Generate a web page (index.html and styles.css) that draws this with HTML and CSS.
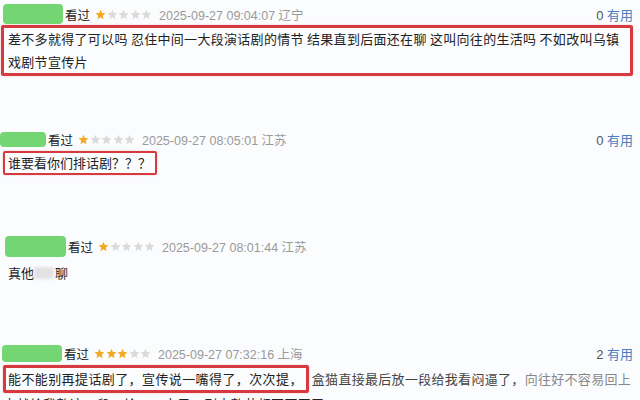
FILE: index.html
```html
<!DOCTYPE html>
<html lang="zh-CN">
<head>
    <meta charset="UTF-8">
    <meta name="viewport" content="width=device-width, initial-scale=1.0">
    <title>短评</title>
    <link rel="stylesheet" href="styles.css">
</head>
<body>
    <svg width="0" height="0" class="defs">
        <defs>
            <polygon id="star" points="12,1.5 15,8.8 22.8,9.4 16.8,14.5 18.7,22.2 12,18 5.3,22.2 7.2,14.5 1.2,9.4 9,8.8"/>
        </defs>
    </svg>

    <div class="list">
        <!-- 评论 1 -->
        <div class="comment c1">
            <div class="meta">
                <span class="user u1"></span>
                <span class="seen">看过</span>
                <span class="stars">
                    <svg viewBox="0 0 24 24" class="on"><use href="#star"/></svg><svg viewBox="0 0 24 24"><use href="#star"/></svg><svg viewBox="0 0 24 24"><use href="#star"/></svg><svg viewBox="0 0 24 24"><use href="#star"/></svg><svg viewBox="0 0 24 24"><use href="#star"/></svg>
                </span>
                <span class="time">2025-09-27 09:04:07 辽宁</span>
                <span class="useful"><span class="num">0</span> <a href="#">有用</a></span>
            </div>
            <p class="text boxed b1">差不多就得了可以吗 忍住中间一大段演话剧的情节 结果直到后面还在聊 这叫向往的生活吗 不如改叫乌镇戏剧节宣传片</p>
        </div>

        <!-- 评论 2 -->
        <div class="comment c2">
            <div class="meta">
                <span class="user u2"></span>
                <span class="seen">看过</span>
                <span class="stars">
                    <svg viewBox="0 0 24 24" class="on"><use href="#star"/></svg><svg viewBox="0 0 24 24"><use href="#star"/></svg><svg viewBox="0 0 24 24"><use href="#star"/></svg><svg viewBox="0 0 24 24"><use href="#star"/></svg><svg viewBox="0 0 24 24"><use href="#star"/></svg>
                </span>
                <span class="time">2025-09-27 08:05:01 江苏</span>
                <span class="useful"><span class="num">0</span> <a href="#">有用</a></span>
            </div>
            <p class="text"><span class="boxed b2">谁要看你们排话剧？？？</span></p>
        </div>

        <!-- 评论 3 -->
        <div class="comment c3">
            <div class="meta">
                <span class="user u3"></span>
                <span class="seen">看过</span>
                <span class="stars">
                    <svg viewBox="0 0 24 24" class="on"><use href="#star"/></svg><svg viewBox="0 0 24 24"><use href="#star"/></svg><svg viewBox="0 0 24 24"><use href="#star"/></svg><svg viewBox="0 0 24 24"><use href="#star"/></svg><svg viewBox="0 0 24 24"><use href="#star"/></svg>
                </span>
                <span class="time">2025-09-27 08:01:44 江苏</span>
            </div>
            <p class="text plain">真他<span class="blur"></span>聊</p>
        </div>

        <!-- 评论 4 -->
        <div class="comment c4">
            <div class="meta">
                <span class="user u4"></span>
                <span class="seen">看过</span>
                <span class="stars">
                    <svg viewBox="0 0 24 24" class="on"><use href="#star"/></svg><svg viewBox="0 0 24 24" class="on"><use href="#star"/></svg><svg viewBox="0 0 24 24" class="on"><use href="#star"/></svg><svg viewBox="0 0 24 24"><use href="#star"/></svg><svg viewBox="0 0 24 24"><use href="#star"/></svg>
                </span>
                <span class="time">2025-09-27 07:32:16 上海</span>
                <span class="useful"><span class="num">2</span> <a href="#">有用</a></span>
            </div>
            <p class="text long"><span class="boxed b4">能不能别再提话剧了，宣传说一嘴得了，次次提，</span><span class="rest">盒猫直接最后放一段给我看闷逼了，<span class="faint">向往好不容易回上</span></span><br>史就给我整这一段，给……户里，剧本整节都要不开了</p>
        </div>
    </div>
</body>
</html>
```

FILE: styles.css
```css
body {
    margin: 0;
    background: #fbfcfd;
    color: #333;
    font-family: "Liberation Sans", "Noto Sans CJK SC", sans-serif;
    overflow: hidden;
}
.defs {
    position: absolute;
}
.list {
    display: flex;
    flex-direction: column;
    padding: 3px 7px 0 0;
}
.meta {
    display: flex;
    align-items: center;
    height: 22px;
    font-size: 12.5px;
}
.user {
    display: block;
    width: 60px;
    height: 20px;
    border-radius: 4px;
    background: #74d673;
}
.u1 { margin-left: 3px; }
.u2 { width: 46px; height: 15px; margin-left: 0; }
.u3 { width: 61px; height: 21px; margin-left: 5px; }
.u4 { width: 60px; height: 17px; margin-left: 2px; }
.seen {
    margin-left: 2px;
    color: #222;
    font-family: "Noto Sans CJK SC", sans-serif;
}
.stars {
    display: flex;
    gap: 0.5px;
    margin-left: 5px;
}
.stars svg {
    width: 11px;
    height: 11px;
    fill: #dadada;
}
.stars svg.on {
    fill: #f1a922;
}
.time {
    margin-left: 7px;
    color: #9a9a9a;
}
.useful {
    margin-left: auto;
    font-size: 13px;
    color: #555;
}
.useful a {
    color: #4a7ec0;
    text-decoration: none;
    font-family: "Noto Sans CJK SC", sans-serif;
}
.text {
    margin: 0;
    font-family: "Noto Sans CJK SC", sans-serif;
    font-size: 13px;
    line-height: 22px;
    color: #222;
}
.boxed {
    border: 3px solid #d6393f;
    border-radius: 2px;
    box-shadow: 0 0 2px rgba(214, 57, 63, 0.35);
}
.b1 {
    margin: 0 0 0 1px;
    padding: 0 4px;
    line-height: 22.5px;
    letter-spacing: 0.3px;
}
.b2 {
    display: inline-block;
    margin-left: 3px;
    padding: 0 4px 0 3px;
    line-height: 20px;
    border-width: 2.5px;
}
.c2 { margin-top: 52px; }
.c2 .text { margin-top: 1px; }
.c3 { margin-top: 60px; }
.plain {
    padding-left: 8px;
    margin-top: 5px;
}
.blur {
    display: inline-block;
    width: 20px;
    height: 12px;
    margin: 0 1px -1px 0;
    background: #e2e2e4;
    filter: blur(1.5px);
}
.c4 { margin-top: 58px; }
.long {
    margin-top: 1px;
    padding-left: 3px;
    white-space: nowrap;
    letter-spacing: 0.4px;
}
.b4 {
    display: inline-block;
    padding: 0 3px 0 2px;
    line-height: 22px;
}
.rest {
    margin-left: 3px;
    color: #444;
    letter-spacing: 0.3px;
}
.faint {
    color: #888;
}
```
